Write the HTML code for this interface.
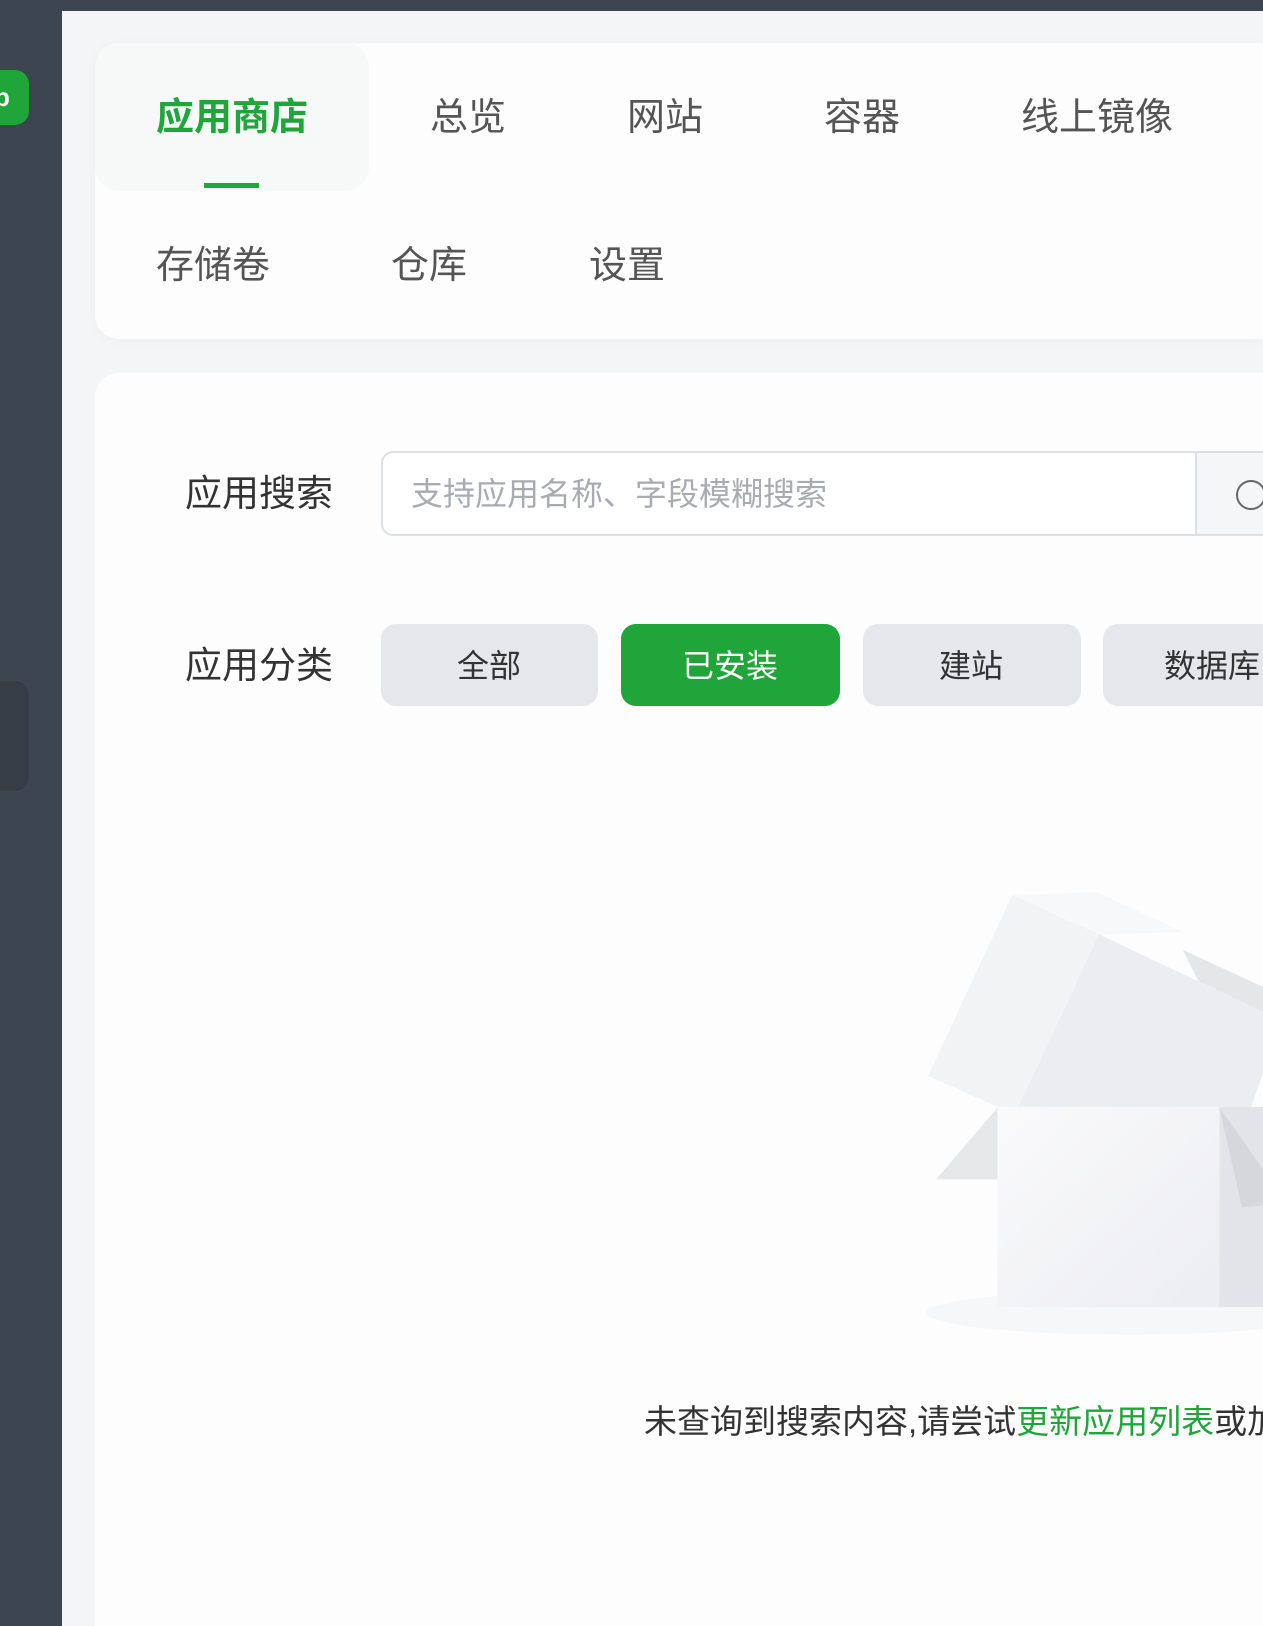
<!DOCTYPE html>
<html><head><meta charset="utf-8"><style>
*{margin:0;padding:0;box-sizing:border-box}
html,body{width:1263px;height:1626px;overflow:hidden}
body{background:#f4f5f7;font-family:"Liberation Sans","Noto Sans CJK SC",sans-serif;position:relative}
#w{position:absolute;left:0;top:0;width:1263px;height:1626px;overflow:hidden}
.abs{position:absolute}
.t{position:absolute;white-space:nowrap;line-height:1}
</style></head><body><div id="w">
<div class="abs" style="left:0;top:0;width:1263px;height:11px;background:#3d4550"></div>
<div class="abs" style="left:0;top:0;width:62px;height:1626px;background:#3d4550"></div>
<div class="abs" style="left:0;top:70px;width:29px;height:55px;border-radius:0 14px 14px 0;background:#20a53a"></div>
<div class="t" style="left:-6px;top:84px;color:#fff;font-weight:bold;font-size:26px">p</div>
<div class="abs" style="left:0;top:681px;width:29px;height:110px;border-radius:0 14px 14px 0;background:#363d47"></div>

<div class="abs" style="left:95px;top:43px;width:1168px;height:296px;border-radius:24px 0 0 24px;background:#fdfdfd;box-shadow:0 2px 12px rgba(0,0,0,0.03)"></div>
<div class="abs" style="left:95px;top:43px;width:274px;height:148px;border-radius:24px;background:#f7f8f8"></div>
<div class="abs" style="left:204px;top:183px;width:55px;height:5px;background:#20a53a"></div>
<div class="t" style="left:156px;top:99px;font-size:38px;color:#20a53a;font-weight:bold">应用商店</div>
<div class="t" style="left:430px;top:99px;font-size:38px;color:#555">总览</div>
<div class="t" style="left:627px;top:99px;font-size:38px;color:#555">网站</div>
<div class="t" style="left:824px;top:99px;font-size:38px;color:#555">容器</div>
<div class="t" style="left:1021px;top:99px;font-size:38px;color:#555">线上镜像</div>
<div class="t" style="left:156px;top:247px;font-size:38px;color:#555">存储卷</div>
<div class="t" style="left:391px;top:247px;font-size:38px;color:#555">仓库</div>
<div class="t" style="left:589px;top:247px;font-size:38px;color:#555">设置</div>

<div class="abs" style="left:95px;top:373px;width:1168px;height:1300px;border-radius:24px 0 0 0;background:#fdfdfd"></div>
<div class="t" style="left:185px;top:475px;font-size:37px;color:#333">应用搜索</div>
<div class="abs" style="left:381px;top:451px;width:900px;height:85px;border:2px solid #dcdfe6;border-radius:12px;background:#fff"></div>
<div class="abs" style="left:1195px;top:451px;width:90px;height:85px;border-left:2px solid #dcdfe6;border-top:2px solid #dcdfe6;border-bottom:2px solid #dcdfe6;background:#f5f6f7"></div>
<div class="abs" style="left:1236px;top:480px;width:30px;height:30px;border:2px solid #666;border-radius:50%"></div>
<div class="t" style="left:411px;top:478px;font-size:32px;color:#a8abb2">支持应用名称、字段模糊搜索</div>

<div class="t" style="left:185px;top:647px;font-size:37px;color:#333">应用分类</div>
<div class="abs" style="left:381px;top:624px;width:217px;height:82px;border-radius:15px;background:#e6e7ea"></div>
<div class="abs" style="left:621px;top:624px;width:219px;height:82px;border-radius:15px;background:#20a53a"></div>
<div class="abs" style="left:863px;top:624px;width:218px;height:82px;border-radius:15px;background:#e6e7ea"></div>
<div class="abs" style="left:1103px;top:624px;width:218px;height:82px;border-radius:15px;background:#e6e7ea"></div>
<div class="t" style="left:457px;top:650px;font-size:32px;color:#333">全部</div>
<div class="t" style="left:682px;top:650px;font-size:32px;color:#fff">已安装</div>
<div class="t" style="left:939px;top:650px;font-size:32px;color:#333">建站</div>
<div class="t" style="left:1164px;top:650px;font-size:32px;color:#333">数据库</div>

<svg class="abs" style="left:600px;top:847px" width="663" height="544" viewBox="0 0 1568 1419" preserveAspectRatio="none">
<defs><linearGradient id="g" x1="0" y1="0" x2="1" y2="1"><stop offset="0" stop-color="#fafafb"/><stop offset="1" stop-color="#ecedf1"/></linearGradient></defs>
<ellipse cx="1250" cy="1215" rx="480" ry="57" fill="#f6f7f9"/>
<polygon points="975,125 1175,118 1380,222 1180,228" fill="#f7f8fa"/>
<polygon points="776,597 975,125 1180,228 990,678 940,678" fill="#f2f3f5"/>
<polygon points="1180,228 1568,430 1568,590 1540,678 990,678" fill="#ecedf0"/>
<polygon points="1378,268 1568,365 1568,430 1415,350" fill="#e5e6e8"/>
<polygon points="940,680 795,867 940,867" fill="#e6e7e9"/>
<rect x="940" y="678" width="525" height="522" fill="url(#g)"/>
<rect x="1465" y="678" width="103" height="522" fill="#e2e4ea"/>
<polygon points="1465,680 1518,940 1568,935 1568,840" fill="#d5d7dd"/>
</svg>
<div class="t" style="left:644px;top:1405px;font-size:33px;color:#333;width:619px;overflow:hidden">未查询到搜索内容,请尝试<span style="color:#20a53a">更新应用列表</span>或加载本地应用</div>
</div></body></html>
